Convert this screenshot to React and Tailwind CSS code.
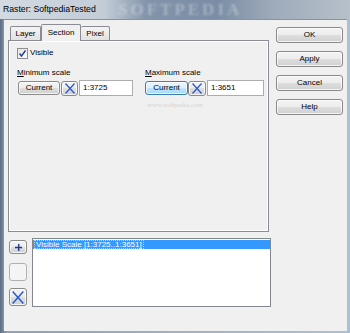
import React from 'react'

function WinButton({ className = '', hot = false, children }) {
  return (
    <div
      className={`flex items-center justify-center rounded-[3px] border text-[8px] leading-none text-black shadow-[inset_0_0_0_1px_rgba(255,255,255,0.75)] ${
        hot
          ? 'border-[#3c7fb1] bg-[linear-gradient(#eaf6fd_0%,#d9f0fc_50%,#bee6fd_50%,#a7d9f5_100%)]'
          : 'border-[#8a8a8a] bg-[linear-gradient(#f4f4f4_0%,#ececec_50%,#dedede_50%,#d0d0d0_100%)]'
      } ${className}`}
    >
      {children}
    </div>
  )
}

function ClearIcon({ w = 10, h = 11 }) {
  return (
    <svg width={w} height={h} viewBox="0 0 10 11" fill="none">
      <path d="M0.5 0.5 L9.5 10.5 M9.5 0.5 L0.5 10.5" stroke="#2457d0" strokeWidth="1.2" />
    </svg>
  )
}

function ScaleGroup({ label, value, hot, widths }) {
  return (
    <div className="flex flex-col">
      <div className="h-[10px] text-[8px] leading-[10px] text-black">
        <span className="underline">{label[0]}</span>
        {label.slice(1)}
      </div>
      <div className={`mt-[2px] flex h-[16px] items-center ${widths.pad}`}>
        <WinButton hot={hot} className={`h-[14px] ${widths.btn}`}>
          Current
        </WinButton>
        <WinButton className={`h-[15px] ${widths.x}`}>
          <ClearIcon />
        </WinButton>
        <div
          className={`ml-[1px] flex h-[16px] items-center border border-[#abadb3] bg-white pl-[3px] text-[8px] text-black ${widths.input}`}
        >
          {value}
        </div>
      </div>
    </div>
  )
}

export default function App() {
  return (
    <div className="flex h-[333px] w-[350px] flex-col overflow-hidden bg-[linear-gradient(90deg,#5d6e85_0%,#8fa2b7_2%,#a3b4c6_60%,#abc0d6_100%)] font-['Liberation_Sans',Arial,sans-serif]">
      {/* title bar */}
      <div className="relative flex h-[19px] items-center bg-[linear-gradient(90deg,#d3dae2_0%,#c2ccd7_30%,#8294aa_42%,#7a8da5_62%,#9eabba_78%,#b7c0ca_100%)] pl-[3px]">
        <span className="absolute left-[118px] top-[1px] font-['Liberation_Serif',serif] text-[17px] font-bold leading-[17px] tracking-[3px] text-white/30 blur-[1px]">
          SOFTPEDIA
        </span>
        <span className="relative text-[8.7px] text-black">Raster: SoftpediaTested</span>
      </div>

      {/* client area */}
      <div className="mx-[3px] flex h-[312px] flex-col bg-[#f0f0f0] shadow-[inset_1px_1px_0_#8494a8]">
        <div className="flex items-start">
          {/* tabs + page */}
          <div className="ml-[5px] mt-[5px] w-[261px]">
            <div className="relative z-10 flex h-[16px] items-end pl-[2px] text-[8px] text-black">
              <div className="flex h-[14px] w-[31px] items-center justify-center rounded-t-[2px] border border-b-0 border-[#898c95] bg-[linear-gradient(#f4f4f4,#e2e2e2)]">
                Layer
              </div>
              <div className="-mb-px flex h-[17px] w-[40px] items-start justify-center rounded-t-[2px] border border-b-0 border-[#898c95] bg-[#f0f0f0] pt-[2px]">
                Section
              </div>
              <div className="flex h-[14px] w-[29px] items-center justify-center rounded-t-[2px] border border-b-0 border-l-0 border-[#898c95] bg-[linear-gradient(#f4f4f4,#e2e2e2)]">
                Pixel
              </div>
            </div>
            <div className="h-[192px] border border-[#898c95] bg-[#f0f0f0] shadow-[inset_1px_1px_0_#fff,inset_-1px_-1px_0_#fff]">
              <div className="ml-[8px] mt-[6px] flex items-center gap-[2px]">
                <div className="flex h-[11px] w-[11px] items-center justify-center border border-[#8e8f8f] bg-[linear-gradient(135deg,#e4e4e4,#fdfdfd)]">
                  <svg width="9" height="9" viewBox="0 0 9 9" fill="none">
                    <path d="M1.5 4.5 L3.5 7 L7.5 1.5" stroke="#213f95" strokeWidth="1.4" />
                  </svg>
                </div>
                <span className="text-[8px] text-black">Visible</span>
              </div>
              <div className="ml-[8px] mt-[9px] flex">
                <div className="w-[128px]">
                  <ScaleGroup
                    label="Minimum scale"
                    value="1:3725"
                    widths={{ pad: 'pl-[1px]', btn: 'w-[42px]', x: 'ml-[1px] w-[17px]', input: 'w-[54px]' }}
                  />
                </div>
                <div className="flex flex-col">
                  <ScaleGroup
                    label="Maximum scale"
                    value="1:3651"
                    hot
                    widths={{ pad: 'pl-0', btn: 'w-[43px]', x: 'w-[18px]', input: 'w-[57px]' }}
                  />
                  <span className="mt-[4px] pl-[2px] font-['Liberation_Serif',serif] text-[7px] text-[#d4d4d4]">
                    www.softpedia.com
                  </span>
                </div>
              </div>
            </div>
          </div>

          {/* dialog buttons */}
          <div className="ml-[7px] mt-[8px] flex flex-col gap-[8px]">
            <WinButton className="h-[16px] w-[67px]">OK</WinButton>
            <WinButton className="h-[16px] w-[67px]">Apply</WinButton>
            <WinButton className="h-[16px] w-[67px]">Cancel</WinButton>
            <WinButton className="h-[16px] w-[67px]">Help</WinButton>
          </div>
        </div>

        {/* list with side buttons */}
        <div className="ml-[6px] mt-[6px] flex items-start">
          <div className="flex w-[18px] flex-col">
            <WinButton className="mt-[2px] h-[14px] w-[18px]">
              <svg width="7" height="7" viewBox="0 0 7 7">
                <path d="M3 0h1.4v7H3zM0 2.8h7v1.4H0z" fill="#1d3a8c" />
              </svg>
            </WinButton>
            <div className="mt-[9px] h-[18px] w-[18px] rounded-[3px] border border-[#adb2b5] bg-[#f4f4f4]" />
            <WinButton className="mt-[7px] h-[18px] w-[18px]">
              <ClearIcon w={12} h={13} />
            </WinButton>
          </div>
          <div className="ml-[5px] h-[69px] w-[239px] border border-[#828790] bg-white pt-[1px]">
            <div className="flex h-[9px] items-center bg-[#3399ff] px-[1px]">
              <span className="border border-dotted border-white/60 px-[1px] text-[8px] leading-[7px] text-white">
                Visible Scale [1:3725..1:3651]
              </span>
            </div>
          </div>
        </div>
      </div>
    </div>
  )
}
